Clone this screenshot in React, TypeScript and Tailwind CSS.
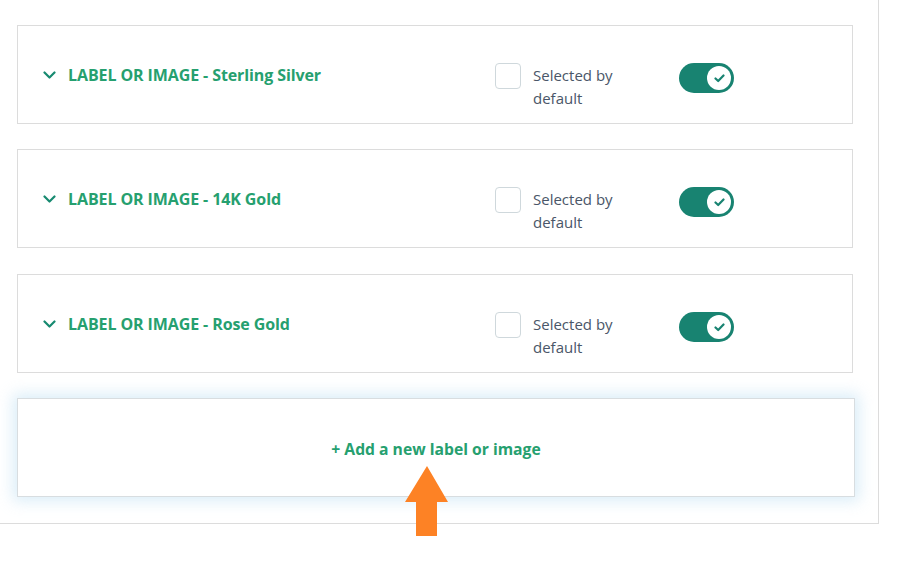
import React from "react";

const items = [
  { name: "Sterling Silver", gap: "" },
  { name: "14K Gold", gap: "mt-[25px]" },
  { name: "Rose Gold", gap: "mt-[26px]" },
];

function Chevron() {
  return (
    <svg width="13" height="8" viewBox="0 0 13 8" fill="none" className="shrink-0">
      <path d="M1.5 1.5L6.5 6.5L11.5 1.5" stroke="#178a70" strokeWidth="2.2" strokeLinecap="round" strokeLinejoin="round" />
    </svg>
  );
}

function Toggle() {
  return (
    <div className="flex h-[30px] w-[55px] items-center justify-end rounded-full bg-[#188371] pr-[3px]">
      <div className="flex h-[24px] w-[24px] items-center justify-center rounded-full bg-white">
        <svg width="11" height="9" viewBox="0 0 11 9" fill="none">
          <path d="M1.5 4.5L4.2 7L9.5 1.5" stroke="#188371" strokeWidth="2.2" strokeLinecap="round" strokeLinejoin="round" />
        </svg>
      </div>
    </div>
  );
}

function OptionCard({ name, gap }: { name: string; gap: string }) {
  return (
    <div className={`flex h-[99px] w-[836px] items-start border border-[#dcdcdc] bg-white pt-[37px] ${gap}`}>
      <div className="flex w-[477px] items-center gap-[12px] pl-[25px] pt-[1px]">
        <Chevron />
        <span className="text-[16px] font-bold leading-[22px] tracking-[-0.1px] text-[#26a06f]">
          LABEL OR IMAGE - {name}
        </span>
      </div>
      <div className="flex w-[184px] items-start gap-[12px]">
        <div className="h-[26px] w-[26px] shrink-0 rounded-[4px] border border-[#cfd8dc] bg-white" />
        <span className="mt-[1px] text-[15px] leading-[23px] text-[#4a5668]">
          Selected by
          <br />
          default
        </span>
      </div>
      <Toggle />
    </div>
  );
}

export default function App() {
  return (
    <div className="relative h-[562px] w-[902px] bg-white font-['Open_Sans',sans-serif]">
      <div className="flex w-[879px] flex-col border-b border-r border-[#dcdcdc] pb-[26px] pl-[17px] pt-[25px]">
        {items.map((it) => (
          <OptionCard key={it.name} name={it.name} gap={it.gap} />
        ))}
        <div className="mt-[25px] flex h-[99px] w-[838px] items-center justify-center border border-[#d8dde0] bg-white pt-[4px] shadow-[0_0_14px_4px_rgba(173,216,240,0.45)]">
          <span className="text-[15.7px] font-bold text-[#26a06f]">+ Add a new label or image</span>
        </div>
      </div>
      <svg className="absolute left-[405px] top-[466px]" width="44" height="71" viewBox="0 0 44 71">
        <path d="M22 0L43 36H32V70H11V36H0Z" fill="#fd8225" />
      </svg>
    </div>
  );
}
